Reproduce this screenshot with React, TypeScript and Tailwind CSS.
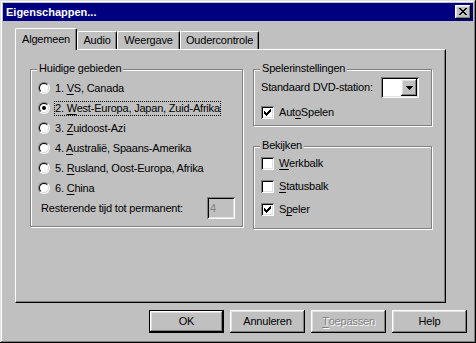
import React from "react";

const raised =
  "shadow-[inset_-1px_-1px_0_#000,inset_1px_1px_0_#fff,inset_-2px_-2px_0_#808080,inset_2px_2px_0_#dfdfdf]";
const sunken =
  "shadow-[inset_1px_1px_0_#808080,inset_-1px_-1px_0_#fff,inset_2px_2px_0_#000,inset_-2px_-2px_0_#dfdfdf]";

function U({ children }: { children: React.ReactNode }) {
  return <span className="underline decoration-1 underline-offset-[2px]">{children}</span>;
}

function Radio({ checked }: { checked?: boolean }) {
  return (
    <span className="w-[12px] h-[12px] shrink-0 rounded-full border border-t-[#808080] border-l-[#808080] border-b-white border-r-white flex">
      <span className="flex-1 rounded-full border border-t-black border-l-black border-b-[#dfdfdf] border-r-[#dfdfdf] bg-white flex items-center justify-center">
        {checked && <span className="w-[4px] h-[4px] rounded-full bg-black" />}
      </span>
    </span>
  );
}

function Check({ checked }: { checked?: boolean }) {
  return (
    <span className={`w-[13px] h-[13px] shrink-0 bg-white flex items-center justify-center ${sunken}`}>
      {checked && (
        <svg width="7" height="7" viewBox="0 0 7 7" shapeRendering="crispEdges">
          <path
            fill="#000"
            d="M6 0h1v1h-1z M5 1h2v1h-2z M0 2h1v1h-1z M4 2h3v1h-3z M0 3h2v1h-2z M3 3h3v1h-3z M0 4h5v1h-5z M1 5h3v1h-3z M2 6h1v1h-1z"
          />
        </svg>
      )}
    </span>
  );
}

function Group({
  label,
  className,
  children,
}: {
  label: string;
  className: string;
  children: React.ReactNode;
}) {
  return (
    <div
      className={`relative border border-[#808080] shadow-[inset_1px_1px_0_#fff,1px_1px_0_#fff] ${className}`}
    >
      <span className="absolute left-[6px] -top-[8px] px-[2px] bg-[#c0c0c0] leading-[13px]">{label}</span>
      {children}
    </div>
  );
}

function Tab({ label, w, active }: { label: string; w: string; active?: boolean }) {
  return (
    <div
      className={`${w} ${
        active ? "h-[22px] -mb-px" : "h-[18px]"
      } bg-[#c0c0c0] border-l border-t border-white border-r border-r-black rounded-t-[2px] shadow-[inset_-1px_0_0_#808080] flex items-center justify-center leading-[13px]`}
    >
      {label}
    </div>
  );
}

function Btn({
  children,
  def,
  disabled,
}: {
  children: React.ReactNode;
  def?: boolean;
  disabled?: boolean;
}) {
  return (
    <div className={`w-[75px] h-[23px] flex ${def ? "border border-black" : ""}`}>
      <div
        className={`flex-1 flex items-center justify-center ${raised} ${
          disabled ? "text-[#808080] [text-shadow:1px_1px_0_#fff]" : ""
        }`}
      >
        {children}
      </div>
    </div>
  );
}

export default function App() {
  const radios: { n: string; u: string; rest: string; checked?: boolean }[] = [
    { n: "1. ", u: "V", rest: "S, Canada" },
    { n: "2. ", u: "W", rest: "est-Europa, Japan, Zuid-Afrika", checked: true },
    { n: "3. ", u: "Z", rest: "uidoost-Azi" },
    { n: "4. ", u: "A", rest: "ustralië, Spaans-Amerika" },
    { n: "5. ", u: "R", rest: "usland, Oost-Europa, Afrika" },
    { n: "6. ", u: "C", rest: "hina" },
  ];

  return (
    <div
      className={`w-[476px] h-[343px] bg-[#c0c0c0] p-[3px] flex flex-col text-[11px] text-black font-['Liberation_Sans',Arial,sans-serif] shadow-[inset_-1px_-1px_0_#000,inset_1px_1px_0_#dfdfdf,inset_-2px_-2px_0_#808080,inset_2px_2px_0_#fff]`}
    >
      {/* Title bar */}
      <div className="h-[18px] bg-[#000080] flex items-center justify-between pl-[3px] pr-[2px]">
        <span className="text-white font-bold text-[11px] leading-[13px]">Eigenschappen...</span>
        <div className={`w-[16px] h-[14px] bg-[#c0c0c0] flex items-center justify-center ${raised}`}>
          <svg width="8" height="7" viewBox="0 0 8 7" shapeRendering="crispEdges" className="-mt-px">
            <path
              fill="#000"
              d="M0 0h2v1h-2z M6 0h2v1h-2z M1 1h2v1h-2z M5 1h2v1h-2z M2 2h4v1h-4z M3 3h2v1h-2z M2 4h4v1h-4z M1 5h2v1h-2z M5 5h2v1h-2z M0 6h2v1h-2z M6 6h2v1h-2z"
            />
          </svg>
        </div>
      </div>

      {/* Body */}
      <div className="flex-1 flex flex-col pl-[12px] pr-[6px] pt-[7px] pb-[7px] tracking-[-0.2px]">
        {/* Tabs */}
        <div className="relative z-10 h-[21px] flex items-end">
          <Tab label="Algemeen" w="w-[62px]" active />
          <Tab label="Audio" w="w-[40px]" />
          <Tab label="Weergave" w="w-[63px]" />
          <Tab label="Oudercontrole" w="w-[79px]" />
        </div>

        {/* Panel */}
        <div className="w-[431px] h-[254px] border-t border-l border-white border-r border-b border-r-black border-b-black shadow-[inset_-1px_-1px_0_#808080] flex gap-[10px] pl-[14px] pt-[19px]">
          <Group label="Huidige gebieden" className="w-[213px] h-[158px] px-[7px] pt-[8px] flex flex-col">
            {radios.map((r, i) => (
              <div key={i} className="h-[20px] flex items-center">
                <Radio checked={r.checked} />
                <span
                  className={`ml-[4px] leading-[13px] border ${
                    r.checked ? "border-dotted border-black" : "border-transparent"
                  }`}
                >
                  {r.n}
                  <U>{r.u}</U>
                  {r.rest}
                </span>
              </div>
            ))}
            <div className="h-[22px] -mt-px flex items-center justify-between">
              <span className="ml-[3px] leading-[13px]">Resterende tijd tot permanent:</span>
              <div className={`w-[28px] h-[22px] flex items-center pl-[3px] text-[#808080] ${sunken}`}>4</div>
            </div>
          </Group>

          <div className="flex flex-col">
            <Group label="Spelerinstellingen" className="w-[179px] h-[57px] pl-[7px] pr-[12px] pt-[7px] flex flex-col">
              <div className="h-[21px] flex items-center justify-between">
                <span className="leading-[13px]">Standaard DVD-station:</span>
                <div className={`w-[38px] h-[21px] bg-white p-[2px] flex justify-end ${sunken}`}>
                  <div className={`w-[16px] h-[17px] bg-[#c0c0c0] flex items-center justify-center ${raised}`}>
                    <svg width="7" height="4" viewBox="0 0 7 4" shapeRendering="crispEdges">
                      <path fill="#000" d="M0 0h7v1h-7z M1 1h5v1h-5z M2 2h3v1h-3z M3 3h1v1h-1z" />
                    </svg>
                  </div>
                </div>
              </div>
              <div className="mt-[8px] flex items-center">
                <Check checked />
                <span className="ml-[5px] leading-[13px]">
                  Aut<U>o</U>Spelen
                </span>
              </div>
            </Group>

            <Group label="Bekijken" className="mt-[20px] w-[179px] h-[83px] pl-[7px] pt-[10px] flex flex-col gap-[10px]">
              <div className="flex items-center">
                <Check />
                <span className="ml-[5px] leading-[13px]">
                  <U>W</U>erkbalk
                </span>
              </div>
              <div className="flex items-center">
                <Check />
                <span className="ml-[5px] leading-[13px]">
                  <U>S</U>tatusbalk
                </span>
              </div>
              <div className="flex items-center">
                <Check checked />
                <span className="ml-[5px] leading-[13px]">
                  S<U>p</U>eler
                </span>
              </div>
            </Group>
          </div>
        </div>

        {/* Buttons */}
        <div className="mt-[7px] flex justify-end gap-[6px]">
          <Btn def>OK</Btn>
          <Btn>Annuleren</Btn>
          <Btn disabled>
            <U>T</U>oepassen
          </Btn>
          <Btn>Help</Btn>
        </div>
      </div>
    </div>
  );
}
